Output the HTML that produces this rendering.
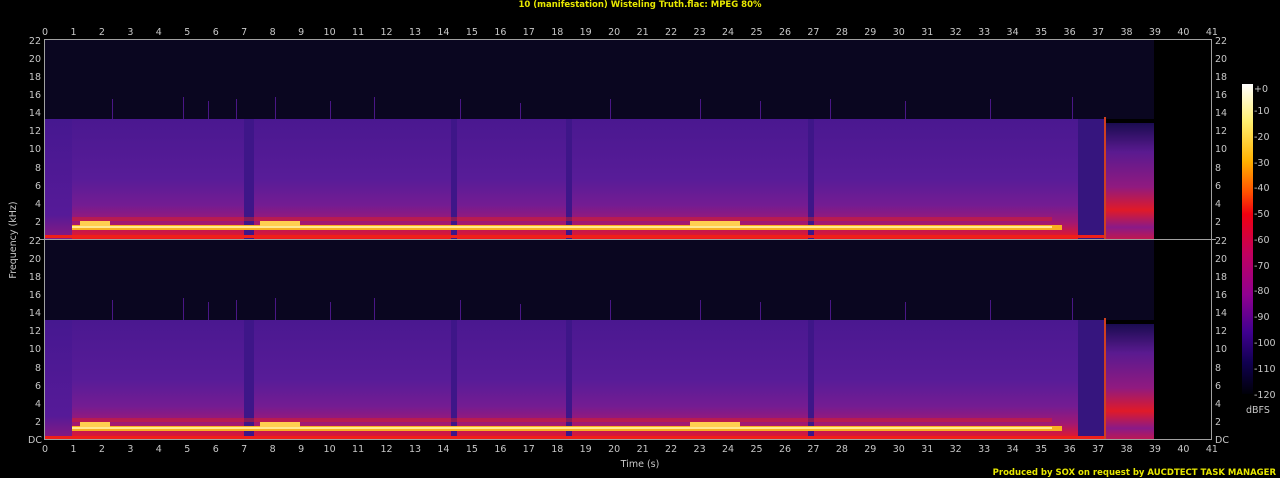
<!DOCTYPE html>
<html><head><meta charset="utf-8"><style>
html,body{margin:0;padding:0;background:#000;width:1280px;height:478px;overflow:hidden}
svg{display:block}
text{font-family:"DejaVu Sans","Liberation Sans",sans-serif;font-size:9.5px;fill:#c8c8c8}
.t{fill:#e8e800;font-weight:bold;font-size:8.5px}
</style></head><body>
<svg width="1280" height="478" viewBox="0 0 1280 478" xmlns="http://www.w3.org/2000/svg">
<defs>
<linearGradient id="main" x1="0" y1="0" x2="0" y2="1">
<stop offset="0" stop-color="#4a1890"/>
<stop offset="0.5" stop-color="#581c98"/>
<stop offset="0.72" stop-color="#741c92"/>
<stop offset="0.86" stop-color="#a01874"/>
<stop offset="0.95" stop-color="#d01840"/>
<stop offset="1" stop-color="#f01818"/>
</linearGradient>
<linearGradient id="quiet" x1="0" y1="0" x2="0" y2="1">
<stop offset="0" stop-color="#461890"/>
<stop offset="0.8" stop-color="#561a98"/>
<stop offset="1" stop-color="#8a1a80"/>
</linearGradient>
<linearGradient id="tail" x1="0" y1="0" x2="0" y2="1">
<stop offset="0" stop-color="#1a0c50"/>
<stop offset="0.25" stop-color="#5a1a90"/>
<stop offset="0.55" stop-color="#901a80"/>
<stop offset="0.75" stop-color="#e01a28"/>
<stop offset="0.9" stop-color="#8a1a88"/>
<stop offset="1" stop-color="#c01850"/>
</linearGradient>
<linearGradient id="cb" x1="0" y1="0" x2="0" y2="1">
<stop offset="0" stop-color="#ffffff"/>
<stop offset="0.12" stop-color="#fff070"/>
<stop offset="0.25" stop-color="#ffb000"/>
<stop offset="0.35" stop-color="#ff5000"/>
<stop offset="0.42" stop-color="#f00010"/>
<stop offset="0.55" stop-color="#c00060"/>
<stop offset="0.68" stop-color="#900090"/>
<stop offset="0.8" stop-color="#400090"/>
<stop offset="0.9" stop-color="#100050"/>
<stop offset="1" stop-color="#000008"/>
</linearGradient>
<g id="p">
<rect x="45" y="0" width="1166" height="200" fill="#000"/>
<rect x="45" y="0" width="1109" height="80" fill="#0a0620"/>
<rect x="45" y="80" width="1033" height="120" fill="url(#main)"/>
<rect x="45" y="80" width="27" height="120" fill="url(#quiet)"/>
<rect x="1078" y="80" width="26" height="120" fill="#36157e"/>
<rect x="1104" y="84" width="50" height="116" fill="url(#tail)"/>
<rect x="1104" y="78" width="2" height="122" fill="#d04020"/>
<g fill="#3e1688">
<rect x="244" y="80" width="10" height="120"/>
<rect x="451" y="80" width="6" height="120"/>
<rect x="566" y="80" width="6" height="120"/>
<rect x="808" y="80" width="6" height="120"/>
</g>
<g fill="#5a1aa0" opacity="0.8">
<rect x="112" y="60" width="1" height="20"/><rect x="183" y="58" width="1" height="22"/><rect x="208" y="62" width="1" height="18"/><rect x="236" y="60" width="1" height="20"/><rect x="275" y="58" width="1" height="22"/><rect x="330" y="62" width="1" height="18"/><rect x="374" y="58" width="1" height="22"/><rect x="460" y="60" width="1" height="20"/><rect x="520" y="64" width="1" height="16"/><rect x="610" y="60" width="1" height="20"/><rect x="700" y="60" width="1" height="20"/><rect x="760" y="62" width="1" height="18"/><rect x="830" y="60" width="1" height="20"/><rect x="905" y="62" width="1" height="18"/><rect x="990" y="60" width="1" height="20"/><rect x="1072" y="58" width="1" height="22"/>
</g>
<rect x="72" y="178" width="980" height="4" fill="#e02020" opacity="0.45"/>
<rect x="72" y="186" width="990" height="5" fill="#f8b020"/>
<rect x="80" y="182" width="30" height="5" fill="#ffd050"/>
<rect x="260" y="182" width="40" height="5" fill="#ffd050"/>
<rect x="690" y="182" width="50" height="5" fill="#ffd050"/>
<rect x="72" y="187" width="980" height="2" fill="#ffe890"/>
<rect x="45" y="196" width="1059" height="3" fill="#f02018"/>
</g>
</defs>
<text x="640" y="7" class="t" text-anchor="middle">10 (manifestation) Wisteling Truth.flac: MPEG 80%</text>
<use href="#p" y="39"/>
<use href="#p" y="240"/>
<rect x="44" y="39" width="1168" height="1" fill="#a0a0a0"/>
<rect x="44" y="439" width="1168" height="1" fill="#a0a0a0"/>
<rect x="44" y="39" width="1" height="401" fill="#a0a0a0"/>
<rect x="1211" y="39" width="1" height="401" fill="#a0a0a0"/>
<rect x="40" y="239" width="1176" height="1" fill="#a0a0a0"/>
<g text-anchor="middle">
<text x="45" y="35">0</text><text x="73.5" y="35">1</text><text x="101.9" y="35">2</text><text x="130.4" y="35">3</text><text x="158.8" y="35">4</text><text x="187.3" y="35">5</text><text x="215.8" y="35">6</text><text x="244.2" y="35">7</text><text x="272.7" y="35">8</text><text x="301.1" y="35">9</text><text x="329.6" y="35">10</text><text x="358.1" y="35">11</text><text x="386.5" y="35">12</text><text x="415" y="35">13</text><text x="443.4" y="35">14</text><text x="471.9" y="35">15</text><text x="500.4" y="35">16</text><text x="528.8" y="35">17</text><text x="557.3" y="35">18</text><text x="585.7" y="35">19</text><text x="614.2" y="35">20</text><text x="642.7" y="35">21</text><text x="671.1" y="35">22</text><text x="699.6" y="35">23</text><text x="728" y="35">24</text><text x="756.5" y="35">25</text><text x="785" y="35">26</text><text x="813.4" y="35">27</text><text x="841.9" y="35">28</text><text x="870.3" y="35">29</text><text x="898.8" y="35">30</text><text x="927.3" y="35">31</text><text x="955.7" y="35">32</text><text x="984.2" y="35">33</text><text x="1012.6" y="35">34</text><text x="1041.1" y="35">35</text><text x="1069.6" y="35">36</text><text x="1098" y="35">37</text><text x="1126.5" y="35">38</text><text x="1154.9" y="35">39</text><text x="1183.4" y="35">40</text><text x="1211.9" y="35">41</text>
</g>
<g text-anchor="middle">
<text x="45" y="452">0</text><text x="73.5" y="452">1</text><text x="101.9" y="452">2</text><text x="130.4" y="452">3</text><text x="158.8" y="452">4</text><text x="187.3" y="452">5</text><text x="215.8" y="452">6</text><text x="244.2" y="452">7</text><text x="272.7" y="452">8</text><text x="301.1" y="452">9</text><text x="329.6" y="452">10</text><text x="358.1" y="452">11</text><text x="386.5" y="452">12</text><text x="415" y="452">13</text><text x="443.4" y="452">14</text><text x="471.9" y="452">15</text><text x="500.4" y="452">16</text><text x="528.8" y="452">17</text><text x="557.3" y="452">18</text><text x="585.7" y="452">19</text><text x="614.2" y="452">20</text><text x="642.7" y="452">21</text><text x="671.1" y="452">22</text><text x="699.6" y="452">23</text><text x="728" y="452">24</text><text x="756.5" y="452">25</text><text x="785" y="452">26</text><text x="813.4" y="452">27</text><text x="841.9" y="452">28</text><text x="870.3" y="452">29</text><text x="898.8" y="452">30</text><text x="927.3" y="452">31</text><text x="955.7" y="452">32</text><text x="984.2" y="452">33</text><text x="1012.6" y="452">34</text><text x="1041.1" y="452">35</text><text x="1069.6" y="452">36</text><text x="1098" y="452">37</text><text x="1126.5" y="452">38</text><text x="1154.9" y="452">39</text><text x="1183.4" y="452">40</text><text x="1211.9" y="452">41</text>
</g>
<text x="640" y="467" text-anchor="middle">Time (s)</text>
<text transform="translate(16,240) rotate(-90)" text-anchor="middle">Frequency (kHz)</text>
<g text-anchor="end">
<text x="41" y="44">22</text><text x="41" y="62">20</text><text x="41" y="80">18</text><text x="41" y="98">16</text><text x="41" y="116">14</text><text x="41" y="134">12</text><text x="41" y="152">10</text><text x="41" y="171">8</text><text x="41" y="189">6</text><text x="41" y="207">4</text><text x="41" y="225">2</text>
<text x="41" y="244">22</text><text x="41" y="262">20</text><text x="41" y="280">18</text><text x="41" y="298">16</text><text x="41" y="316">14</text><text x="41" y="334">12</text><text x="41" y="352">10</text><text x="41" y="371">8</text><text x="41" y="389">6</text><text x="41" y="407">4</text><text x="41" y="425">2</text><text x="42" y="443">DC</text>
</g>
<g>
<text x="1215" y="44">22</text><text x="1215" y="62">20</text><text x="1215" y="80">18</text><text x="1215" y="98">16</text><text x="1215" y="116">14</text><text x="1215" y="134">12</text><text x="1215" y="152">10</text><text x="1215" y="171">8</text><text x="1215" y="189">6</text><text x="1215" y="207">4</text><text x="1215" y="225">2</text>
<text x="1215" y="244">22</text><text x="1215" y="262">20</text><text x="1215" y="280">18</text><text x="1215" y="298">16</text><text x="1215" y="316">14</text><text x="1215" y="334">12</text><text x="1215" y="352">10</text><text x="1215" y="371">8</text><text x="1215" y="389">6</text><text x="1215" y="407">4</text><text x="1215" y="425">2</text><text x="1215" y="443">DC</text>
</g>
<rect x="1242" y="84" width="11" height="310" fill="url(#cb)"/>
<g font-size="9">
<text x="1254" y="92">+0</text><text x="1254" y="114">-10</text><text x="1254" y="140">-20</text><text x="1254" y="166">-30</text><text x="1254" y="191">-40</text><text x="1254" y="217">-50</text><text x="1254" y="243">-60</text><text x="1254" y="269">-70</text><text x="1254" y="294">-80</text><text x="1254" y="320">-90</text><text x="1254" y="346">-100</text><text x="1254" y="372">-110</text><text x="1254" y="398">-120</text>
</g>
<text x="1246" y="413">dBFS</text>
<text x="1276" y="475" class="t" text-anchor="end">Produced by SOX on request by AUCDTECT TASK MANAGER</text>
</svg>
</body></html>
